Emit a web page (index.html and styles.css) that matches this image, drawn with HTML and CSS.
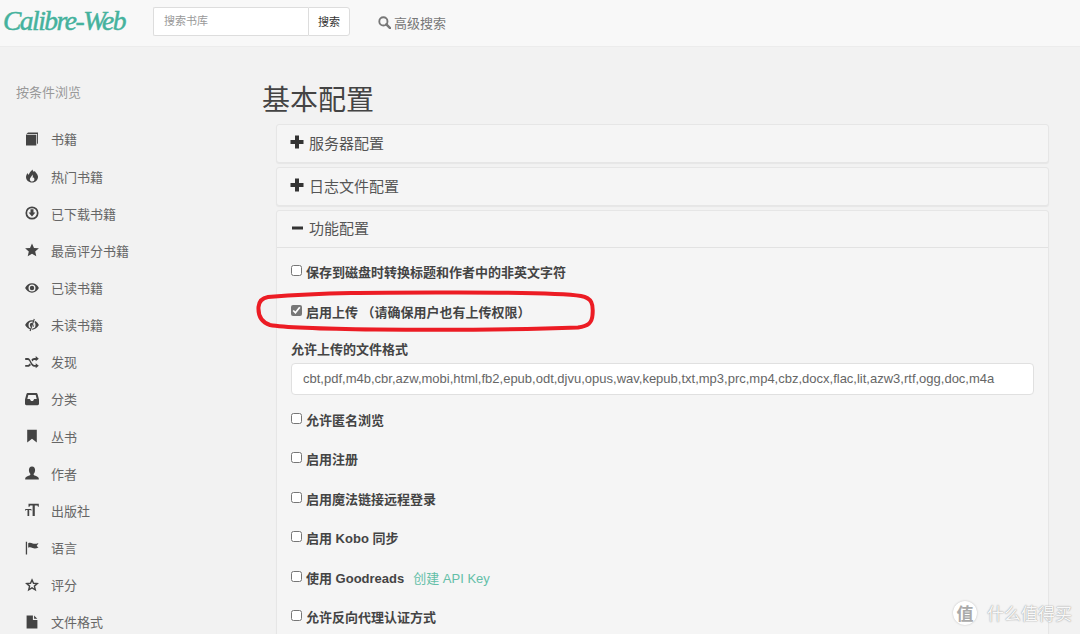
FILE: index.html
```html
<!DOCTYPE html>
<html lang="zh-CN">
<head>
<meta charset="utf-8">
<title>Calibre-Web</title>
<link rel="stylesheet" href="styles.css">
</head>
<body>
<header class="navbar">
  <a class="brand">Calibre-Web</a>
  <form class="search">
    <input class="search-input" type="text" placeholder="搜索书库">
    <button class="search-btn" type="button">搜索</button>
  </form>
  <a class="advanced">
    <svg class="adv-icon" viewBox="0 0 14 14"><circle cx="5.800" cy="5.800" r="4.400" fill="none" stroke="currentColor" stroke-width="2"/><path d="M9 9l4 4" stroke="currentColor" stroke-width="2.600" stroke-linecap="round"/></svg>
    高级搜索
  </a>
</header>
<div class="layout">
  <aside class="sidebar">
    <div class="side-title">按条件浏览</div>
    <nav class="side-nav">
      <a class="side-item"><svg class="ico" viewBox="0 0 14 14"><path d="M1 2.500 3 .5h10v10.700l-.9 1V1.900H2.500z M1 2.700h10.300V13.500H1z"/></svg>书籍</a>
      <a class="side-item"><svg class="ico" viewBox="0 0 14 14"><path fill-rule="evenodd" d="M7.600.4c.3 2.300 1.300 2.700 2.200 1.500.3 1.400 3 2.800 3.200 5.600.2 3.300-2.400 6-5.900 6S1 11 1 8C1 6.300 1.900 5 2.700 3.900c.1 1 .5 1.500 1 1.900C4.200 3.700 5.900 1.900 7.600.4zM7.200 5.500C7.300 7.300 4.700 8.500 4.800 10.500c.1 1.300 1.100 2.100 2.300 2.100 1.400 0 2.300-1 2.300-2.300 0-1.100-.6-1.500-.9-2.100-.2.500-.4.800-.8.900C7.900 8 8 6.700 7.200 5.500z"/></svg>热门书籍</a>
      <a class="side-item"><svg class="ico" viewBox="0 0 14 14"><circle cx="7" cy="7" r="5.700" fill="none" stroke="currentColor" stroke-width="1.700"/><path d="M5.500 3.300h3v3.300h1.900L7 10.500 3.600 6.600h1.900z"/></svg>已下载书籍</a>
      <a class="side-item"><svg class="ico" viewBox="0 0 14 14"><path d="M7 .4l2 4.500 4.900.4-3.700 3.200 1.100 4.800L7 10.800l-4.300 2.500 1.100-4.800L.1 5.300 5 4.900z"/></svg>最高评分书籍</a>
      <a class="side-item"><svg class="ico" viewBox="0 0 14 14"><path fill-rule="evenodd" d="M7 2.300c3 0 5.500 2 6.900 4.700C12.500 9.700 10 11.700 7 11.700S1.500 9.700.1 7C1.500 4.300 4 2.300 7 2.300zM7 3.500A3.500 3.500 0 1 0 7 10.500 3.500 3.500 0 0 0 7 3.500zM7 4.800a2.200 2.200 0 1 1 0 4.400 2.200 2.200 0 0 1 0-4.400z"/></svg>已读书籍</a>
      <a class="side-item"><svg class="ico" viewBox="0 0 14 14"><path fill-rule="evenodd" d="M7 2.300c3 0 5.500 2 6.900 4.700C12.500 9.700 10 11.700 7 11.700S1.500 9.700.1 7C1.500 4.300 4 2.300 7 2.300zM7 3.500A3.500 3.500 0 1 0 7 10.500 3.500 3.500 0 0 0 7 3.500zM7 4.800a2.200 2.200 0 1 1 0 4.400 2.200 2.200 0 0 1 0-4.400z"/><path class="slash-gap" d="M9.800 1 5.600 13"/><path class="slash" d="M9.300 1 5.100 13"/></svg>未读书籍</a>
      <a class="side-item"><svg class="ico" viewBox="0 0 14 14"><path d="M.2 3h2.600c2.900 0 3.800 6.900 6.500 6.900h1.400V8.200l3.100 2.500-3.100 2.600v-1.500H9.300C5.900 11.800 5.100 5 2.800 5H.2zM.2 9.900h2.700c.8 0 1.400-.8 1.900-1.700l1.100 1.800c-.7 1-1.700 1.800-3 1.800H.2zM9.300 3h1.400V1.100l3.100 2.600-3.100 2.500V4.900H9.300c-.8 0-1.300.7-1.800 1.600L6.400 4.700C7.100 3.800 8 3 9.300 3z"/></svg>发现</a>
      <a class="side-item"><svg class="ico" viewBox="0 0 14 14"><path fill-rule="evenodd" d="M3 1h8c.8 0 1.400.4 1.600 1.200L14 7.500v4.300c0 .8-.6 1.400-1.400 1.400H1.400C.6 13.200 0 12.600 0 11.800V7.500L1.400 2.200C1.600 1.400 2.200 1 3 1zM3.300 2.900 2.300 7H4.800L6 9H8L9.200 7H11.700L10.700 2.900z"/></svg>分类</a>
      <a class="side-item"><svg class="ico" viewBox="0 0 14 14"><path d="M2.200.8h9.600v12.700L7 9.800 2.200 13.500z"/></svg>丛书</a>
      <a class="side-item"><svg class="ico" viewBox="0 0 14 14"><path d="M7 .5c2.100 0 3.100 1.600 3.100 3.500 0 1.800-.8 3.300-1.500 4.100 0 .9.300 1.200 1 1.500 2 .7 4.200 1.400 4.200 3v1H.2v-1c0-1.600 2.200-2.300 4.200-3 .7-.3 1-.6 1-1.500C4.700 7.300 3.900 5.800 3.900 4 3.900 2.100 4.900.5 7 .5z"/></svg>作者</a>
      <a class="side-item"><svg class="ico" viewBox="0 0 14 14"><path d="M3.500.8h10.300v3h-.8l-.6-1.400H9.800v10.600H7.600V2.400H5.100l-.6 1.400h-1zM.2 6h6.200v1.800h-.5l-.3-.8H4.200v6H2.500V7H1l-.3.800H.2z"/></svg>出版社</a>
      <a class="side-item"><svg class="ico" viewBox="0 0 14 14"><path d="M.8.800h1.300v12.700H.8zM3.200 2.300c1.600-1 3-.4 4.500.2 1.700.6 3.300.5 5.800-.5-.5 1.300-1.200 2.100-1.800 2.700.5.700 1.100 1.200 1.800 1.700-2.400 1.300-4.300 1.300-5.900.6-1.600-.7-3-.9-4.400-.2z"/></svg>语言</a>
      <a class="side-item"><svg class="ico" viewBox="0 0 14 14"><path fill="none" stroke="currentColor" stroke-width="1.400" d="M7 1.900l1.500 3.400 3.800.3-2.900 2.500.9 3.700L7 9.800l-3.300 2 .9-3.700L1.700 5.600l3.800-.3z"/></svg>评分</a>
      <a class="side-item"><svg class="ico" viewBox="0 0 14 14"><path d="M1.600.4h6.300v4.500h4.500v8.700H1.600zM9.100.6l3.200 3.200H9.100z"/></svg>文件格式</a>
    </nav>
  </aside>
  <main class="content">
    <h1 class="page-title">基本配置</h1>
    <section class="panel">
      <div class="panel-head"><svg class="pm" viewBox="0 0 14 14"><path d="M5 .5h4v4.500h4.500v4H9v4.500H5V9H.5V5H5z"/></svg>服务器配置</div>
    </section>
    <section class="panel">
      <div class="panel-head"><svg class="pm" viewBox="0 0 14 14"><path d="M5 .5h4v4.500h4.500v4H9v4.500H5V9H.5V5H5z"/></svg>日志文件配置</div>
    </section>
    <section class="panel">
      <div class="panel-head panel-head-open"><svg class="pm" viewBox="0 0 14 14"><rect x="2" y="5.500" width="11" height="3"/></svg>功能配置</div>
      <div class="panel-body">
        <label class="check"><input type="checkbox">保存到磁盘时转换标题和作者中的非英文字符</label>
        <label class="check"><input type="checkbox" checked>启用上传 （请确保用户也有上传权限）</label>
        <div class="field">
          <label class="field-label">允许上传的文件格式</label>
          <input class="field-input" type="text" value="cbt,pdf,m4b,cbr,azw,mobi,html,fb2,epub,odt,djvu,opus,wav,kepub,txt,mp3,prc,mp4,cbz,docx,flac,lit,azw3,rtf,ogg,doc,m4a">
        </div>
        <label class="check"><input type="checkbox">允许匿名浏览</label>
        <label class="check"><input type="checkbox">启用注册</label>
        <label class="check"><input type="checkbox">启用魔法链接远程登录</label>
        <label class="check"><input type="checkbox">启用 Kobo 同步</label>
        <label class="check"><input type="checkbox">使用 Goodreads<a class="api-link">创建 API Key</a></label>
        <label class="check"><input type="checkbox">允许反向代理认证方式</label>
      </div>
    </section>
  </main>
</div>
<svg class="annotation" viewBox="0 0 340 42"><path d="M12 7C70 2.500 120 2.500 180 2.500 235 2.500 300 2 325 6 336 8 337.500 14 336.500 25 336 33 332 36 322 37.500 270 39.500 190 40 120 39.500 80 39 30 38 14 35 5 32 2 26 2.500 17 3 11 6 8 12 7Z"/></svg>
<div class="watermark"><span class="wm-badge">值</span><span class="wm-text">什么值得买</span></div>
</body>
</html>
```

FILE: styles.css
```css
* { box-sizing: border-box; }
html, body { margin: 0; height: 634px; overflow: hidden; }
body {
  position: relative;
  background: #f2f2f2;
  color: #444;
  font-family: "Liberation Sans", "Noto Sans CJK SC", sans-serif;
  font-size: 13px;
}
.navbar {
  display: flex;
  align-items: center;
  height: 47px;
  background: #f8f8f8;
  border-bottom: 1px solid #ececec;
  padding: 0 0 4px 3px;
}
.brand {
  width: 150px;
  color: #45b29d;
  font-family: "Liberation Serif", serif;
  font-style: italic;
  font-size: 27.500px;
  line-height: 30px;
  letter-spacing: -1.500px;
  -webkit-text-stroke: .5px #45b29d;
}
.search { display: flex; height: 29px; }
.search-input {
  width: 155px;
  border: 1px solid #ddd;
  border-right: 0;
  border-radius: 2px 0 0 2px;
  background: #fff;
  padding: 0 10px;
  font: inherit;
  font-size: 11px;
  outline: 0;
}
.search-input::placeholder { color: #999; }
.search-btn {
  width: 42px;
  padding: 0;
  border: 1px solid #ddd;
  border-radius: 0 3px 3px 0;
  background: #fff;
  color: #333;
  font: inherit;
  font-size: 11px;
}
.advanced {
  display: flex;
  align-items: center;
  gap: 3px;
  margin-left: 28px;
  padding-top: 2px;
  color: #777;
}
.adv-icon { width: 13px; height: 13px; }
.layout { display: flex; align-items: flex-start; }
.sidebar { width: 262px; flex: none; padding: 37px 0 0 16px; }
.side-title { color: #999; line-height: 18px; height: 18px; }
.side-nav { display: flex; flex-direction: column; margin-top: 18.400px; }
.side-item {
  display: flex;
  align-items: center;
  gap: 12px;
  height: 37.150px;
  padding-left: 9px;
  color: #666;
}
.ico { width: 14px; height: 14px; flex: none; fill: #444; color: #444; }
.slash-gap { fill: none; stroke: #f2f2f2; stroke-width: 1.600; }
.slash { fill: none; stroke: #444; stroke-width: 1.100; }
.content { width: 787px; flex: none; }
.page-title {
  margin: 34px 0 3px;
  color: #444;
  font-size: 28px;
  font-weight: 400;
  line-height: 40px;
}
.panel {
  margin: 0 0 4px 14px;
  background: #f5f5f5;
  border: 1px solid #e6e6e6;
  border-radius: 3px;
  box-shadow: 0 1px 1px rgba(0, 0, 0, .05);
}
.panel-head {
  display: flex;
  align-items: center;
  gap: 5px;
  height: 37px;
  padding: 0 0 3px 13px;
  font-size: 15px;
  color: #555;
}
.panel-head-open { border-bottom: 1px solid #e2e2e2; }
.pm { width: 14px; height: 14px; fill: #333; flex: none; }
.panel-body { display: flex; flex-direction: column; padding: 4px 14px 0; }
.check {
  display: flex;
  align-items: center;
  height: 39.400px;
  font-weight: 700;
  color: #444;
}
.check input { width: 11px; height: 11px; margin: -2px 4px 0 0; accent-color: #777; }
.field { display: flex; flex-direction: column; padding-top: 7px; padding-bottom: 5px; }
.field-label { font-weight: 700; line-height: 24px; }
.field-input {
  height: 32px;
  margin-top: 1px;
  padding: 0 11px;
  background: #fff;
  border: 1px solid #e0e0e0;
  border-radius: 4px;
  color: #666;
  font: inherit;
  font-size: 13px;
  outline: 0;
}
.api-link { margin-left: 9px; color: #64bfa8; font-weight: 400; }
.annotation {
  position: absolute;
  left: 256px;
  top: 290px;
  width: 340px;
  height: 42px;
  fill: none;
  stroke: #ec1c24;
  stroke-width: 4;
}
.watermark {
  position: absolute;
  right: 8px;
  bottom: 9px;
  display: flex;
  align-items: center;
  gap: 10px;
  color: #f8f8f8;
  font-size: 17px;
}
.wm-badge {
  display: flex;
  align-items: center;
  justify-content: center;
  width: 24px;
  height: 24px;
  border-radius: 50%;
  background: #fff;
  box-shadow: 0 0 2px #bbb;
  color: #aaa;
  font-size: 17px;
  font-weight: 700;
}
.wm-text { text-shadow: 0 0 1px #999, 0 0 2px #bbb; }
```
